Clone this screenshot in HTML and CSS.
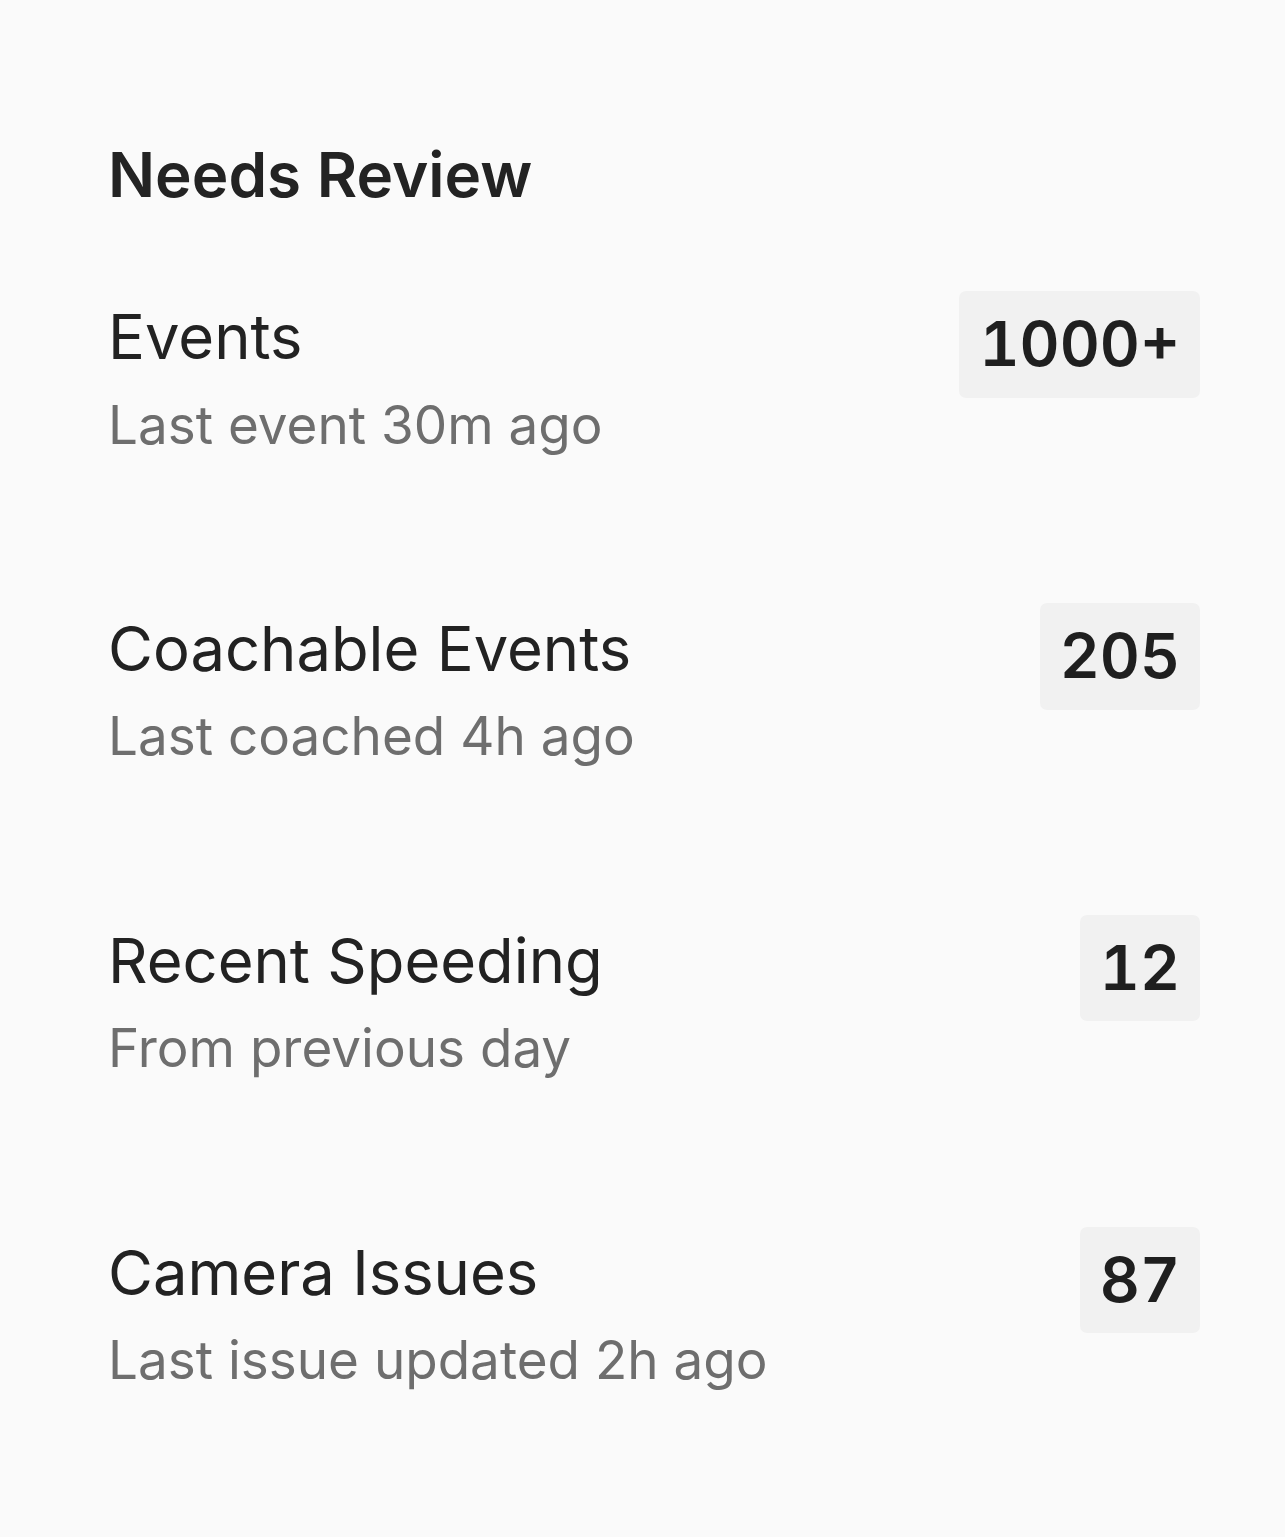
FILE: index.html
```html
<!DOCTYPE html>
<html lang="en">
<head>
    <meta charset="UTF-8">
    <meta name="viewport" content="width=device-width, initial-scale=1.0">
    <title>Needs Review</title>
    <link rel="stylesheet" href="styles.css">
</head>
<body>

    <div class="panel">
        <h2 class="panel-title">Needs Review</h2>

        <div class="review-list">
            <div class="review-row">
                <div class="review-text">
                    <div class="review-name">Events</div>
                    <div class="review-sub">Last event 30m ago</div>
                </div>
                <span class="count">1000+</span>
            </div>
            <div class="review-row">
                <div class="review-text">
                    <div class="review-name">Coachable Events</div>
                    <div class="review-sub">Last coached 4h ago</div>
                </div>
                <span class="count">205</span>
            </div>
            <div class="review-row">
                <div class="review-text">
                    <div class="review-name">Recent Speeding</div>
                    <div class="review-sub">From previous day</div>
                </div>
                <span class="count">12</span>
            </div>
            <div class="review-row">
                <div class="review-text">
                    <div class="review-name">Camera Issues</div>
                    <div class="review-sub">Last issue updated 2h ago</div>
                </div>
                <span class="count">87</span>
            </div>
        </div>
    </div>

</body>
</html>
```

FILE: styles.css
```css
body {
    margin: 0;
    font-family: Inter, "Noto Sans", sans-serif;
    background-color: #fafafa;
    color: #222222;
}
.panel {
    padding: 138px 85px 0 108px;
}
.panel-title {
    margin: 0;
    font-size: 62px;
    font-weight: 600;
    line-height: 1.2;
    color: #232323;
}
.review-list {
    display: flex;
    flex-direction: column;
    gap: 146px;
    margin-top: 79px;
}
.review-row {
    display: flex;
    justify-content: space-between;
    align-items: flex-start;
}
.review-name {
    font-size: 61.5px;
    line-height: 1.5;
    color: #222222;
}
.review-sub {
    margin-top: 10px;
    font-size: 53px;
    line-height: 1.2;
    color: #6e6e6e;
}
.count {
    padding: 16px 20px;
    font-size: 62px;
    font-weight: 600;
    line-height: 1.2;
    font-feature-settings: "tnum";
    background-color: #f1f1f1;
    border-radius: 7px;
    color: #1f1f1f;
}
```
